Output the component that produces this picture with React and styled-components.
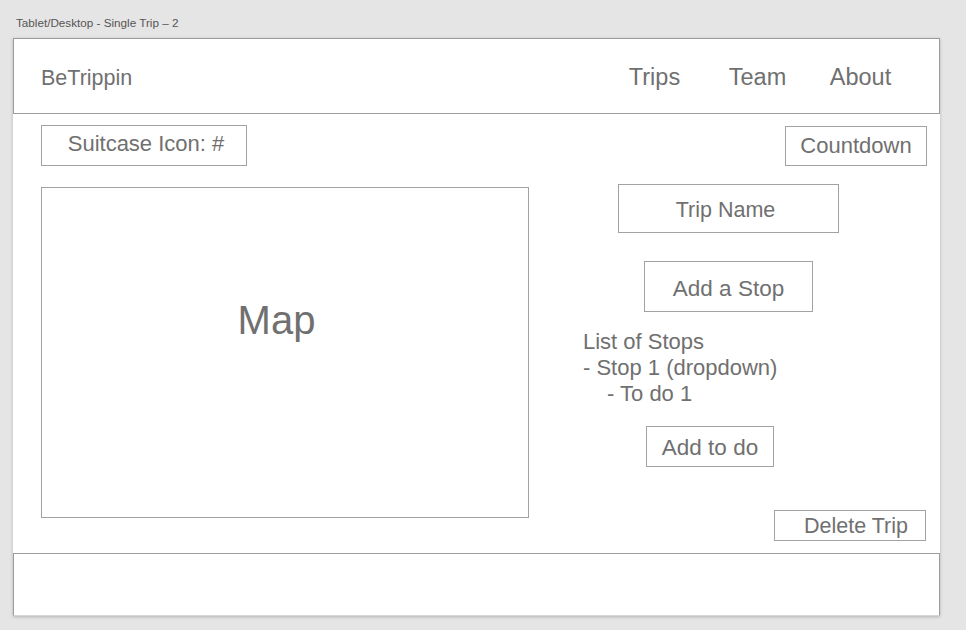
import React from "react";
import styled, { createGlobalStyle } from "styled-components";

const Global = createGlobalStyle`
  html, body { margin: 0; padding: 0; background: #e5e5e5; }
  body { font-family: "Liberation Sans", Arial, sans-serif; color: #707070; }
  * { box-sizing: border-box; }
`;

const Canvas = styled.div`
  width: 966px;
  height: 630px;
  padding: 16px 0 0 13px;
  overflow: hidden;
`;

const BoardLabel = styled.div`
  font-size: 11.7px;
  line-height: 14px;
  color: #555;
  margin-left: 3px;
`;

const Artboard = styled.div`
  margin-top: 8px;
  width: 927px;
  background: #fff;
  box-shadow: 0 1px 3px rgba(0, 0, 0, 0.22);
  display: flex;
  flex-direction: column;
`;

const Header = styled.header`
  height: 76px;
  border: 1px solid #9c9c9c;
  display: flex;
  align-items: center;
  justify-content: space-between;
  padding: 0 27px 0 27px;
`;

const Logo = styled.div`
  font-size: 21.5px;
  padding-top: 4px;
`;

const Nav = styled.nav`
  display: flex;
`;

const NavLink = styled.a`
  width: 103px;
  text-align: center;
  font-size: 23.5px;
  padding-top: 3px;
  color: #707070;
  text-decoration: none;
`;

const Main = styled.main`
  height: 439px;
  display: flex;
`;

const LeftCol = styled.div`
  padding: 11px 0 0 28px;
  display: flex;
  flex-direction: column;
  gap: 21px;
`;

const RightCol = styled.div`
  flex: 1;
  padding: 0 13px 0 0;
  display: flex;
  flex-direction: column;
`;

const Box = styled.div`
  width: ${(p) => p.$w}px;
  height: ${(p) => p.$h}px;
  border: 1px solid #a2a2a2;
  display: flex;
  align-items: center;
  justify-content: ${(p) => p.$justify || "center"};
  padding: ${(p) => p.$pad || "0"};
  font-size: ${(p) => p.$fs || 22}px;
  margin-top: ${(p) => p.$mt || 0}px;
  margin-left: ${(p) => (p.$right ? "auto" : `${p.$ml || 0}px`)};
  margin-right: ${(p) => p.$mr || 0}px;
  flex-shrink: 0;
`;

const StopList = styled.div`
  margin: ${(p) => p.$mt}px 0 0 ${(p) => p.$ml}px;
  font-size: 22px;
  line-height: 26px;
`;

const ListLine = styled.div`
  padding-left: ${(p) => p.$indent || 0}px;
`;

const Footer = styled.footer`
  height: 63px;
  border: 1px solid #9c9c9c;
  border-bottom-color: #d6d6d6;
`;

export default function App() {
  return (
    <>
      <Global />
      <Canvas>
        <BoardLabel>Tablet/Desktop - Single Trip – 2</BoardLabel>
        <Artboard>
          <Header>
            <Logo>BeTrippin</Logo>
            <Nav>
              <NavLink>Trips</NavLink>
              <NavLink>Team</NavLink>
              <NavLink>About</NavLink>
            </Nav>
          </Header>
          <Main>
            <LeftCol>
              <Box $w={206} $h={41} $pad="0 0 4px 4px">Suitcase Icon: #</Box>
              <Box $w={488} $h={331} $fs={40} $pad="0 17px 64px 0">Map</Box>
            </LeftCol>
            <RightCol>
              <Box $w={142} $h={40} $mt={12} $right>Countdown</Box>
              <Box $w={221} $h={49} $mt={18} $ml={89} $fs={21.5} $pad="4px 6px 0 0">Trip Name</Box>
              <Box $w={169} $h={51} $mt={28} $ml={115} $fs={22.5} $pad="4px 0 0 0">Add a Stop</Box>
              <StopList $mt={17} $ml={54}>
                <ListLine>List of Stops</ListLine>
                <ListLine>- Stop 1 (dropdown)</ListLine>
                <ListLine $indent={24}>- To do 1</ListLine>
              </StopList>
              <Box $w={128} $h={41} $mt={19} $ml={117} $fs={22.5} $pad="2px 0 0 0">Add to do</Box>
              <Box $w={152} $h={31} $mt={43} $right $mr={1} $justify="flex-end" $fs={21.5} $pad="2px 17px 0 0">
                Delete Trip
              </Box>
            </RightCol>
          </Main>
          <Footer />
        </Artboard>
      </Canvas>
    </>
  );
}
